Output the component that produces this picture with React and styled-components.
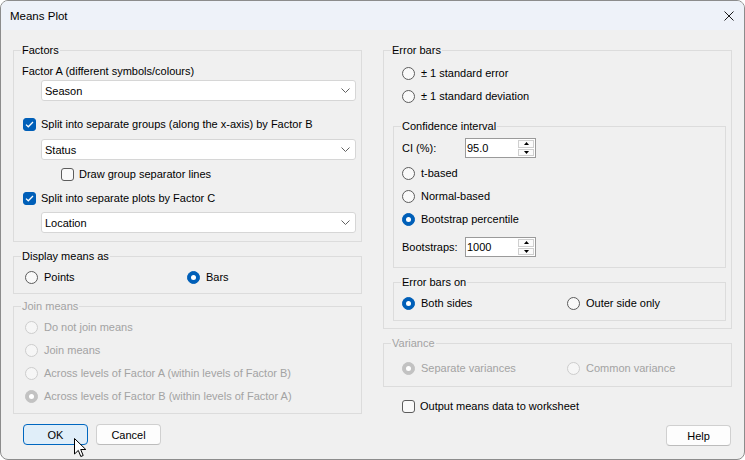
import React from "react";
import styled, { createGlobalStyle } from "styled-components";

const GlobalStyle = createGlobalStyle`
  html, body { margin: 0; padding: 0; background: #ffffff; }
  body { font-family: "Liberation Sans", Arial, sans-serif; font-size: 11px; color: #000; }
  * { box-sizing: border-box; }
`;

const Window = styled.div`
  position: relative;
  width: 745px;
  height: 460px;
  display: flex;
  flex-direction: column;
  background: #f0f0f0;
  border: 1px solid #8c8c8c;
  border-radius: 8px;
  overflow: hidden;
`;

const TitleBar = styled.div`
  height: 29px;
  flex: none;
  display: flex;
  align-items: center;
  justify-content: space-between;
  padding: 0 10px 0 9px;
  background: #eef2f9;
`;

const Title = styled.span`
  font-size: 11.5px;
  line-height: 16px;
`;

const Body = styled.div`
  flex: 1;
  display: grid;
  grid-template-columns: 349px 349px;
  column-gap: 21px;
  padding: 12px 12px 0 12px;
  align-items: start;
`;

const Column = styled.div`
  display: flex;
  flex-direction: column;
`;

const Group = styled.fieldset`
  margin: ${p => p.$mt || 0}px 0 0 ${p => p.$ml || 0}px;
  padding: ${p => p.$pad};
  width: ${p => (p.$w ? `${p.$w}px` : "auto")};
  min-width: 0;
  border: 1px solid #dcdcdc;
  color: ${p => (p.$disabled ? "#a3a3a3" : "#000")};
`;

const Legend = styled.legend`
  margin-left: 7px;
  padding: 0 1px;
  line-height: 16px;
`;

const Line = styled.div`
  display: flex;
  align-items: center;
  height: ${p => p.$h || 16}px;
  margin-top: ${p => p.$mt || 0}px;
  margin-left: ${p => p.$ml || 0}px;
  line-height: 16px;
  white-space: nowrap;
`;

const Pair = styled.div`
  display: grid;
  grid-template-columns: ${p => p.$col}px auto;
  height: 16px;
  margin-left: ${p => p.$ml || 0}px;
`;

const Mark = styled.span`
  display: flex;
  align-items: center;
  gap: ${p => p.$gap || 6}px;
  white-space: nowrap;
`;

const RadioDot = styled.span`
  flex: none;
  width: 13px;
  height: 13px;
  border-radius: 50%;
  display: flex;
  align-items: center;
  justify-content: center;
  background: ${p => (p.$on ? (p.$off ? "#c2c2c2" : "#005fb8") : p.$off ? "#f6f6f6" : "#f9f9f9")};
  border: 1px solid ${p => (p.$on ? (p.$off ? "#c2c2c2" : "#005fb8") : p.$off ? "#cdcdcd" : "#5c5c5c")};
  &::after {
    content: "";
    display: ${p => (p.$on ? "block" : "none")};
    width: 5px;
    height: 5px;
    border-radius: 50%;
    background: #ffffff;
  }
`;

const CheckBox = styled.span`
  flex: none;
  width: 13px;
  height: 13px;
  border-radius: 3px;
  display: flex;
  align-items: center;
  justify-content: center;
  background: ${p => (p.$on ? "#005fb8" : "#f9f9f9")};
  border: 1px solid ${p => (p.$on ? "#005fb8" : "#5c5c5c")};
`;

const Combo = styled.div`
  display: flex;
  align-items: center;
  justify-content: space-between;
  width: 315px;
  height: 21px;
  margin: ${p => p.$mt || 0}px 0 0 27px;
  padding: 0 5px 0 3px;
  background: #ffffff;
  border: 1px solid #d6d6d6;
  border-radius: 3px;
`;

const SpinLabel = styled.span`
  width: 63px;
  flex: none;
`;

const Spin = styled.div`
  display: flex;
  width: 71px;
  height: 20px;
  background: #ffffff;
  border: 1px solid #9a9a9a;
`;

const SpinValue = styled.span`
  flex: 1;
  padding-left: 1px;
  line-height: 18px;
`;

const SpinButtons = styled.div`
  width: 17px;
  display: flex;
  flex-direction: column;
  gap: 1px;
  padding: 1px 1px 1px 0;
`;

const SpinBtn = styled.div`
  flex: 1;
  display: flex;
  align-items: center;
  justify-content: center;
  background: #fbfbfb;
  border: 1px solid #cfcfcf;
`;

const ButtonRow = styled.div`
  display: flex;
  gap: 8px;
  margin: 10px 0 0 10px;
`;

const Button = styled.button`
  width: 65px;
  height: 21px;
  padding: 0;
  font: inherit;
  color: #000;
  border-radius: 4px;
  background: ${p => (p.$primary ? "#e0eef9" : "#fdfdfd")};
  border: 1px solid ${p => (p.$primary ? "#0067c0" : "#d0d0d0")};
  border-bottom-color: ${p => (p.$primary ? "#0067c0" : "#bcbcbc")};
`;

const HelpButton = styled(Button)`
  align-self: flex-end;
  margin: 11px 1px 0 0;
`;

const Pointer = styled.svg`
  position: absolute;
  left: 73px;
  top: 437px;
`;

function Radio({ on, off, children }) {
  return (
    <Mark>
      <RadioDot $on={on} $off={off} />
      {children}
    </Mark>
  );
}

function Check({ on, children }) {
  return (
    <Mark $gap={5}>
      <CheckBox $on={on}>
        {on && (
          <svg width="9" height="7" viewBox="0 0 9 7">
            <path d="M1 3.6 L3.3 5.8 L8 1" fill="none" stroke="#fff" strokeWidth="1.3" />
          </svg>
        )}
      </CheckBox>
      {children}
    </Mark>
  );
}

function Chevron() {
  return (
    <svg width="9" height="5" viewBox="0 0 9 5">
      <path d="M0.5 0.5 L4.5 4.5 L8.5 0.5" fill="none" stroke="#606060" strokeWidth="1" />
    </svg>
  );
}

function Dropdown({ value, mt }) {
  return (
    <Combo $mt={mt}>
      <span>{value}</span>
      <Chevron />
    </Combo>
  );
}

function SpinBox({ value }) {
  return (
    <Spin>
      <SpinValue>{value}</SpinValue>
      <SpinButtons>
        <SpinBtn>
          <svg width="5" height="3" viewBox="0 0 5 3"><polygon points="0,3 2.5,0 5,3" fill="#000" /></svg>
        </SpinBtn>
        <SpinBtn>
          <svg width="5" height="3" viewBox="0 0 5 3"><polygon points="0,0 5,0 2.5,3" fill="#000" /></svg>
        </SpinBtn>
      </SpinButtons>
    </Spin>
  );
}

export default function App() {
  return (
    <>
      <GlobalStyle />
      <Window>
        <TitleBar>
          <Title>Means Plot</Title>
          <svg width="10" height="10" viewBox="0 0 10 10">
            <path d="M0.5 0.5 L9.5 9.5 M9.5 0.5 L0.5 9.5" stroke="#1a1a1a" strokeWidth="1" />
          </svg>
        </TitleBar>
        <Body>
          <Column>
            <Group $pad="5px 5px 8px 0">
              <Legend>Factors</Legend>
              <Line $ml={8}>Factor A (different symbols/colours)</Line>
              <Dropdown value="Season" mt={1} />
              <Line $mt={15} $ml={9}><Check on>Split into separate groups (along the x-axis) by Factor B</Check></Line>
              <Dropdown value="Status" mt={7} />
              <Line $mt={6} $ml={47}><Check>Draw group separator lines</Check></Line>
              <Line $mt={8} $ml={9}><Check on>Split into separate plots by Factor C</Check></Line>
              <Dropdown value="Location" mt={6} />
            </Group>
            <Group $mt={6} $pad="5px 0 8px 0">
              <Legend>Display means as</Legend>
              <Pair $col={162} $ml={11}>
                <Radio>Points</Radio>
                <Radio on>Bars</Radio>
              </Pair>
            </Group>
            <Group $mt={4} $pad="5px 0 9px 0" $disabled>
              <Legend>Join means</Legend>
              <Line $ml={11}><Radio off>Do not join means</Radio></Line>
              <Line $mt={7} $ml={11}><Radio off>Join means</Radio></Line>
              <Line $mt={7} $ml={11}><Radio off>Across levels of Factor A (within levels of Factor B)</Radio></Line>
              <Line $mt={7} $ml={11}><Radio on off>Across levels of Factor B (within levels of Factor A)</Radio></Line>
            </Group>
            <ButtonRow>
              <Button $primary>OK</Button>
              <Button>Cancel</Button>
            </ButtonRow>
          </Column>
          <Column>
            <Group $pad="7px 5px 7px 0">
              <Legend>Error bars</Legend>
              <Line $ml={18}><Radio>± 1 standard error</Radio></Line>
              <Line $mt={7} $ml={18}><Radio>± 1 standard deviation</Radio></Line>
              <Group $mt={14} $ml={9} $w={333} $pad="4px 0 10px 0">
                <Legend>Confidence interval</Legend>
                <Line $h={20} $ml={8}><SpinLabel>CI (%):</SpinLabel><SpinBox value="95.0" /></Line>
                <Line $mt={7} $ml={8}><Radio>t-based</Radio></Line>
                <Line $mt={7} $ml={8}><Radio>Normal-based</Radio></Line>
                <Line $mt={7} $ml={8}><Radio on>Bootstrap percentile</Radio></Line>
                <Line $h={20} $mt={10} $ml={8}><SpinLabel>Bootstraps:</SpinLabel><SpinBox value="1000" /></Line>
              </Group>
              <Group $mt={6} $ml={9} $w={333} $pad="5px 0 9px 0">
                <Legend>Error bars on</Legend>
                <Pair $col={165} $ml={8}>
                  <Radio on>Both sides</Radio>
                  <Radio>Outer side only</Radio>
                </Pair>
              </Group>
            </Group>
            <Group $mt={6} $pad="9px 0 10px 0" $disabled>
              <Legend>Variance</Legend>
              <Pair $col={165} $ml={18}>
                <Radio on off>Separate variances</Radio>
                <Radio off>Common variance</Radio>
              </Pair>
            </Group>
            <Line $mt={11} $ml={19}><Check>Output means data to worksheet</Check></Line>
            <HelpButton>Help</HelpButton>
          </Column>
        </Body>
        <Pointer width="13" height="20" viewBox="0 0 13 20">
          <path d="M0.5 0.5 L0.5 16 L4.3 12.4 L6.8 18.5 L9.2 17.5 L6.7 11.5 L11.8 11.5 Z" fill="#fff" stroke="#000" strokeWidth="1" strokeLinejoin="round" />
        </Pointer>
      </Window>
    </>
  );
}
